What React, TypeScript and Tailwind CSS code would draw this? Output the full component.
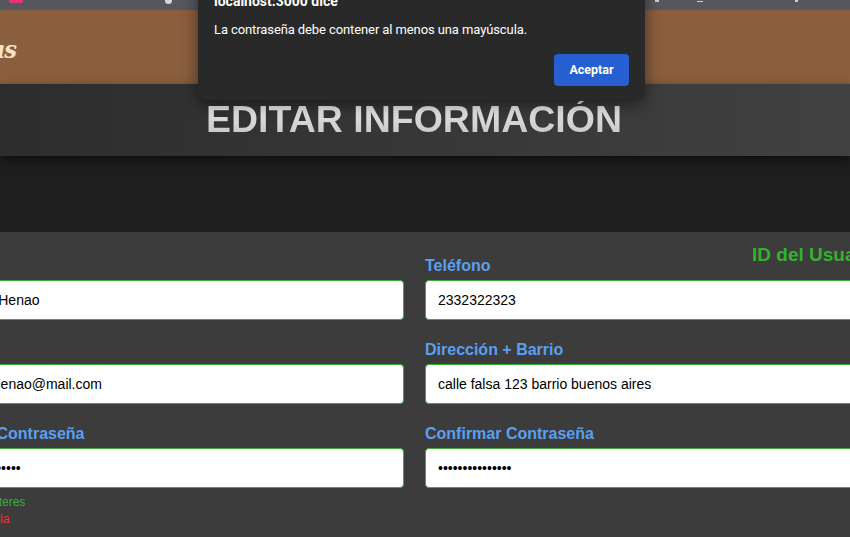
const fields = [
  { label: "Cliente", value: "Pedro Henao", type: "text" },
  { label: "Teléfono", value: "2332322323", type: "text" },
  { label: "Correo", value: "pedrohenao@mail.com", type: "text" },
  { label: "Dirección + Barrio", value: "calle falsa 123 barrio buenos aires", type: "text" },
  { label: "Nueva Contraseña", value: "Abcdefghijklm", type: "password" },
  { label: "Confirmar Contraseña", value: "abcdefghijklmno", type: "password" },
];

function Field({ label, value, type, children }: { label: string; value: string; type: string; children?: React.ReactNode }) {
  return (
    <div className="flex flex-col">
      <label className="text-[16px] leading-[20px] font-bold text-[#5b9ff0] whitespace-nowrap mb-[4px]">{label}</label>
      <input
        readOnly
        type={type}
        value={value}
        className="h-[40px] w-full rounded-[4px] border border-[#3cae3c] bg-white px-[12px] text-[14px] text-black outline-none"
      />
      {children}
    </div>
  );
}

export default function App() {
  return (
    <div className="relative w-[850px] h-[537px] overflow-hidden bg-[#3c3c3c] font-['Liberation_Sans',Arial,sans-serif]">
      {/* browser strip */}
      <div className="flex h-[10px] items-start bg-[#56585d] pl-[9px]">
        <div className="h-[3px] w-[14px] rounded-b-[2px] bg-[#e8336b]"></div>
        <div className="ml-[142px] h-[4px] w-[7px] rounded-b-full bg-[#d8d8d8]"></div>
        <div className="ml-[483px] h-[2px] w-[4px] bg-[#cfcfcf]"></div>
        <div className="ml-[38px] mt-[1px] h-[1px] w-[6px] bg-[#cfcfcf]"></div>
        <div className="ml-[92px] h-[2px] w-[3px] bg-[#cfcfcf]"></div>
      </div>

      {/* brand header */}
      <div className="flex h-[74px] items-center bg-[#8a5f3e] pt-[6px]">
        <div className="flex w-[16px] justify-end whitespace-nowrap font-['DejaVu_Serif_Condensed','DejaVu_Serif',serif] text-[25px] font-bold italic tracking-[-1px] text-[#fbe3c4]">
          Delicias
        </div>
      </div>

      {/* title band */}
      <div className="relative z-10 flex h-[72px] items-center justify-center bg-gradient-to-r from-[#2d2d2d] to-[#414141] pr-[22px] shadow-[0_4px_10px_rgba(0,0,0,0.55)]">
        <h1 className="bg-gradient-to-b from-[#f0f0f0] to-[#c2c2c2] bg-clip-text text-[37.5px] font-bold leading-none text-transparent">
          EDITAR INFORMACIÓN
        </h1>
      </div>

      {/* spacer */}
      <div className="h-[76px] bg-[#1e1e1e]"></div>

      {/* form */}
      <div className="relative pt-[24px]">
        <div className="absolute left-[752px] top-[9px] whitespace-nowrap text-[19px] font-bold text-[#35b12c]">
          ID del Usuario: 12
        </div>
        <div className="ml-[-56px] grid grid-cols-[460px_460px] gap-x-[21px] gap-y-[20px]">
          {fields.map((f, i) => (
            <Field key={f.label} {...f}>
              {i === 4 && (
                <div className="mt-[6px] ml-[-5px] text-[12px] leading-[17px]">
                  <div className="text-[#3fae3f]">✓ 8+ caracteres</div>
                  <div className="text-[#e53935]">✗ Mayúscula</div>
                </div>
              )}
            </Field>
          ))}
        </div>
      </div>

      {/* alert dialog */}
      <div className="absolute left-[198px] top-[-25px] z-20 w-[447px] rounded-[8px] bg-[#292929] px-[16px] pt-[16px] pb-[14px] font-['Roboto',sans-serif] text-white shadow-[0_4px_16px_rgba(0,0,0,0.5)]">
        <div className="text-[14px] font-bold leading-[20px]">localhost:3000 dice</div>
        <div className="mt-[9px] text-[13px] leading-[20px] tracking-[-0.1px]">La contraseña debe contener al menos una mayúscula.</div>
        <div className="mt-[14px] flex justify-end">
          <button className="h-[32px] w-[75px] rounded-[4px] bg-[#255fd0] text-[12.5px] font-bold text-white">Aceptar</button>
        </div>
      </div>
    </div>
  );
}
